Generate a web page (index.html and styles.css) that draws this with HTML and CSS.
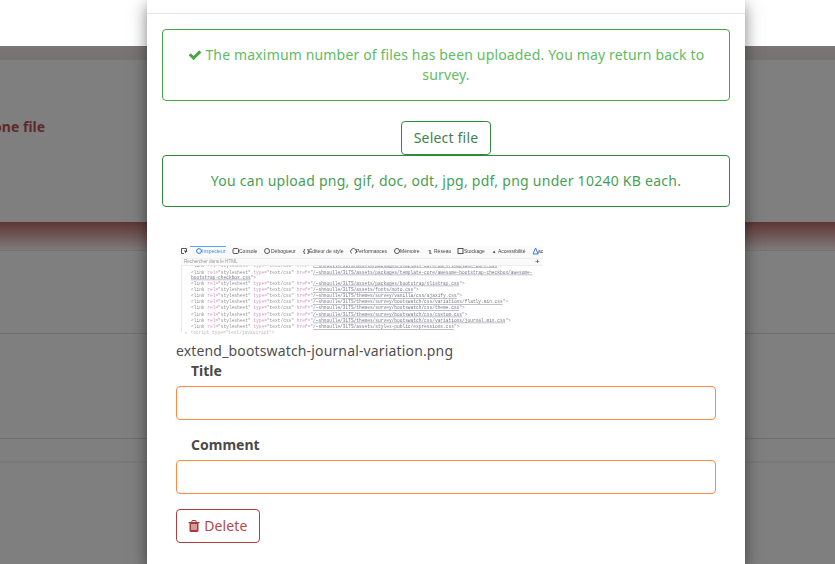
FILE: index.html
```html
<!DOCTYPE html>
<html lang="en">
<head>
<meta charset="utf-8">
<title>Upload</title>
<link rel="stylesheet" href="styles.css">
</head>
<body>
<div class="page">
  <div class="page-top"></div>
  <div class="page-dim">
    <div class="band-top"></div>
    <div class="question-row"><span class="question-text">Please upload at least one file</span></div>
    <div class="band-red"></div>
    <div class="row-a"></div>
    <div class="row-b"></div>
    <div class="row-c"></div>
  </div>
</div>
<div class="modal">
  <div class="modal-head"></div>
  <div class="modal-body">
    <div class="alert alert-max">
      <svg class="icon-check" viewBox="0 0 1792 1792"><path d="M1671 566q0 40-28 68l-724 724-136 136q-28 28-68 28t-68-28l-136-136-362-362q-28-28-28-68t28-68l136-136q28-28 68-28t68 28l294 295 656-657q28-28 68-28t68 28l136 136q28 28 28 68z"/></svg>
      The maximum number of files has been uploaded. You may return back to survey.
    </div>
    <div class="select-row"><button class="btn-select" type="button">Select file</button></div>
    <div class="alert alert-info">You can upload png, gif, doc, odt, jpg, pdf, png under 10240 KB each.</div>
    <div class="file-item">
      <svg class="thumb" viewBox="0 0 370 92" width="370" height="92">
        <g class="t-code">
          <text y="22.5"><tspan x="15" class="c-grey">&lt;link </tspan><tspan class="c-pink">rel=</tspan><tspan class="c-grey">"stylesheet" </tspan><tspan class="c-pink">type=</tspan><tspan class="c-grey">"text/css" </tspan><tspan class="c-pink">href=</tspan><tspan class="c-grey">"</tspan><tspan class="c-link">/~shnoulle/3LTS/assets/packages/template-core/core/template-core.css</tspan><tspan class="c-grey">"&gt;</tspan></text>
          <text y="29.7"><tspan x="15" class="c-grey">&lt;link </tspan><tspan class="c-pink">rel=</tspan><tspan class="c-grey">"stylesheet" </tspan><tspan class="c-pink">type=</tspan><tspan class="c-grey">"text/css" </tspan><tspan class="c-pink">href=</tspan><tspan class="c-grey">"</tspan><tspan class="c-link">/~shnoulle/3LTS/assets/packages/template-core/awesome-bootstrap-checkbox/awesome-</tspan></text>
          <text y="34.7"><tspan x="15" class="c-link">bootstrap-checkbox.css</tspan><tspan class="c-grey">"&gt;</tspan></text>
          <text y="40.7"><tspan x="15" class="c-grey">&lt;link </tspan><tspan class="c-pink">rel=</tspan><tspan class="c-grey">"stylesheet" </tspan><tspan class="c-pink">type=</tspan><tspan class="c-grey">"text/css" </tspan><tspan class="c-pink">href=</tspan><tspan class="c-grey">"</tspan><tspan class="c-link">/~shnoulle/3LTS/assets/packages/bootstrap/vlistrap.css</tspan><tspan class="c-grey">"&gt;</tspan></text>
          <text y="47"><tspan x="15" class="c-grey">&lt;link </tspan><tspan class="c-pink">rel=</tspan><tspan class="c-grey">"stylesheet" </tspan><tspan class="c-pink">type=</tspan><tspan class="c-grey">"text/css" </tspan><tspan class="c-pink">href=</tspan><tspan class="c-grey">"</tspan><tspan class="c-link">/~shnoulle/3LTS/assets/fonts/noto.css</tspan><tspan class="c-grey">"&gt;</tspan></text>
          <text y="53"><tspan x="15" class="c-grey">&lt;link </tspan><tspan class="c-pink">rel=</tspan><tspan class="c-grey">"stylesheet" </tspan><tspan class="c-pink">type=</tspan><tspan class="c-grey">"text/css" </tspan><tspan class="c-pink">href=</tspan><tspan class="c-grey">"</tspan><tspan class="c-link">/~shnoulle/3LTS/themes/survey/vanilla/css/ajaxify.css</tspan><tspan class="c-grey">"&gt;</tspan></text>
          <text y="59"><tspan x="15" class="c-grey">&lt;link </tspan><tspan class="c-pink">rel=</tspan><tspan class="c-grey">"stylesheet" </tspan><tspan class="c-pink">type=</tspan><tspan class="c-grey">"text/css" </tspan><tspan class="c-pink">href=</tspan><tspan class="c-grey">"</tspan><tspan class="c-link">/~shnoulle/3LTS/themes/survey/bootswatch/css/variations/flatly.min.css</tspan><tspan class="c-grey">"&gt;</tspan></text>
          <text y="65.3"><tspan x="15" class="c-grey">&lt;link </tspan><tspan class="c-pink">rel=</tspan><tspan class="c-grey">"stylesheet" </tspan><tspan class="c-pink">type=</tspan><tspan class="c-grey">"text/css" </tspan><tspan class="c-pink">href=</tspan><tspan class="c-grey">"</tspan><tspan class="c-link">/~shnoulle/3LTS/themes/survey/bootswatch/css/theme.css</tspan><tspan class="c-grey">"&gt;</tspan></text>
          <text y="71.7"><tspan x="15" class="c-grey">&lt;link </tspan><tspan class="c-pink">rel=</tspan><tspan class="c-grey">"stylesheet" </tspan><tspan class="c-pink">type=</tspan><tspan class="c-grey">"text/css" </tspan><tspan class="c-pink">href=</tspan><tspan class="c-grey">"</tspan><tspan class="c-link">/~shnoulle/3LTS/themes/survey/bootswatch/css/custom.css</tspan><tspan class="c-grey">"&gt;</tspan></text>
          <text y="77.7"><tspan x="15" class="c-grey">&lt;link </tspan><tspan class="c-pink">rel=</tspan><tspan class="c-grey">"stylesheet" </tspan><tspan class="c-pink">type=</tspan><tspan class="c-grey">"text/css" </tspan><tspan class="c-pink">href=</tspan><tspan class="c-grey">"</tspan><tspan class="c-link">/~shnoulle/3LTS/themes/survey/bootswatch/css/variations/journal.min.css</tspan><tspan class="c-grey">"&gt;</tspan></text>
          <text y="84"><tspan x="15" class="c-grey">&lt;link </tspan><tspan class="c-pink">rel=</tspan><tspan class="c-grey">"stylesheet" </tspan><tspan class="c-pink">type=</tspan><tspan class="c-grey">"text/css" </tspan><tspan class="c-pink">href=</tspan><tspan class="c-grey">"</tspan><tspan class="c-link">/~shnoulle/3LTS/assets/styles-public/expressions.css</tspan><tspan class="c-grey">"&gt;</tspan></text>
          <text y="89.5"><tspan x="9" class="c-faint">▸ &lt;script type="text/javascript"&gt;</tspan></text>
        </g>
        <rect class="t-bar" x="5" y="2" width="362" height="19.5"/>
        <rect class="t-tab" x="14" y="2" width="36" height="1"/>
        <rect class="t-line" x="5" y="14.5" width="362" height="0.5"/>
        <rect class="t-line" x="5" y="21" width="362" height="0.6"/>
        <rect class="t-gutter" x="5" y="21.6" width="1" height="66"/>
        <g class="t-ui">
          <path class="t-ico" d="M10.5 7V4.5h-5v5H8"/>
          <path class="t-solid" d="M8 6l3.5 1.6-1.4.6-.6 1.4z"/>
          <circle class="t-blue-ico" cx="23" cy="7" r="2.4"/>
          <text class="t-blue" x="26" y="9">Inspecteur</text>
          <rect class="t-ico" x="57" y="4.5" width="5.5" height="5" rx="1"/>
          <text x="63" y="9">Console</text>
          <circle class="t-ico" cx="91" cy="7" r="2.5"/>
          <text x="95" y="9">Débogueur</text>
          <text class="t-brace" x="127" y="9.2">{ }</text>
          <text x="133" y="9">Éditeur de style</text>
          <path class="t-ico" d="M175.6 9.4a2.8 2.8 0 1 1 3.8 0"/>
          <text x="180" y="9">Performances</text>
          <circle class="t-ico" cx="221" cy="7" r="2.5"/>
          <text x="224" y="9">Mémoire</text>
          <text x="252" y="9.5">⇅</text>
          <text x="258" y="9">Réseau</text>
          <rect class="t-ico" x="282" y="4.5" width="5" height="5"/>
          <text x="288" y="9">Stockage</text>
          <text x="316" y="9.5">✦</text>
          <text x="322" y="9">Accessibilité</text>
          <path class="t-blue-ico" d="M357 10l2.6-6 2.6 6z"/>
          <text x="362" y="9">ac</text>
          <text class="t-search" x="8" y="19">Rechercher dans le HTML</text>
          <text class="t-plus" x="359" y="20">+</text>
        </g>
      </svg>
      <div class="file-name">extend_bootswatch-journal-variation.png</div>
      <label class="field-label" for="f-title">Title</label>
      <input class="field-input" id="f-title" type="text">
      <label class="field-label field-label-2" for="f-comment">Comment</label>
      <input class="field-input" id="f-comment" type="text">
      <button class="btn-delete" type="button">
        <svg class="icon-trash" viewBox="128 0 1536 1792"><path d="M704 1376v-704q0-14-9-23t-23-9h-64q-14 0-23 9t-9 23v704q0 14 9 23t23 9h64q14 0 23-9t9-23zm256 0v-704q0-14-9-23t-23-9h-64q-14 0-23 9t-9 23v704q0 14 9 23t23 9h64q14 0 23-9t9-23zm256 0v-704q0-14-9-23t-23-9h-64q-14 0-23 9t-9 23v704q0 14 9 23t23 9h64q14 0 23-9t9-23zm-544-992h448l-48-117q-7-9-17-11h-317q-10 2-17 11zm928 32v64q0 14-9 23t-23 9h-96v948q0 83-47 143.5t-113 60.5h-832q-66 0-113-58.5t-47-141.5v-952h-96q-14 0-23-9t-9-23v-64q0-14 9-23t23-9h309l70-167q15-37 54-63t79-26h320q40 0 79 26t54 63l70 167h309q14 0 23 9t9 23z"/></svg>
        Delete
      </button>
    </div>
  </div>
</div>
</body>
</html>
```
FILE: styles.css
```css
* { box-sizing: border-box; }
html, body { margin: 0; padding: 0; height: 100%; overflow: hidden; background: #fff; }
body { font-family: "Noto Sans", sans-serif; font-size: 14px; line-height: 20px; color: #444; }

.page { height: 564px; display: flex; flex-direction: column; }
.page-top { height: 46px; background: #fff; }
.page-dim { flex: 1; background: #7f7f7f; display: flex; flex-direction: column; overflow: hidden; }
.band-top { height: 14px; background: linear-gradient(#7a7676, #777272); }
.question-row { height: 162px; display: flex; justify-content: flex-end; width: 45px; overflow: hidden; white-space: nowrap; padding-top: 57px; }
.question-text { font-weight: 700; font-size: 14px; color: #5f2a2a; flex: none; }
.band-red { height: 29px; background: linear-gradient(#5f3535, #7f7a7a); border-bottom: 1px solid #737373; }
.row-a { height: 83px; border-bottom: 1px solid #6e6e6e; }
.row-b { height: 105px; border-bottom: 1px solid #6e6e6e; }
.row-c { height: 24px; background: linear-gradient(#7f7f7f 90%, #757575); }

.modal { position: absolute; top: 0; left: 147px; width: 598px; height: 564px; background: #fff; box-shadow: 0 5px 15px rgba(0, 0, 0, .5); overflow: hidden; }
.modal-head { height: 14px; border-bottom: 1px solid #e5e5e5; }
.modal-body { padding: 15px; display: flex; flex-direction: column; }

.alert { border: 1px solid; border-radius: 4px; padding: 15px; text-align: center; background: #fff; }
.alert-max { border-color: #43a743; color: #62bb62; padding-left: 20px; padding-right: 20px; letter-spacing: .16px; }
.alert-info { border-color: #2e8b37; color: #489f54; letter-spacing: .26px; }
.icon-check { width: 14px; height: 14px; fill: #43a743; vertical-align: -2px; }

.select-row { display: flex; justify-content: center; margin-top: 20px; }
.btn-select { font: inherit; letter-spacing: .2px; width: 90px; height: 34px; background: #fff; border: 1px solid #2e8b37; border-radius: 4px; color: #457f4d; padding: 0; }

.file-item { padding: 37px 14px 0; display: flex; flex-direction: column; align-items: flex-start; }
.thumb { display: block; filter: blur(.4px); }
.t-bar { fill: #fafafa; }
.t-tab { fill: #5aa5f0; }
.t-line { fill: #e4e4e4; }
.t-gutter { fill: #e8e8e8; }
.t-ui text { font-family: "Liberation Sans", sans-serif; font-size: 5px; fill: #444; }
.t-ui .t-blue { fill: #3f8fe8; }
.t-ui .t-search { fill: #999; font-size: 4.6px; }
.t-ui .t-plus { font-size: 8px; fill: #333; }
.t-ui .t-brace { font-size: 6px; font-weight: 700; }
.t-ico { fill: none; stroke: #444; stroke-width: .9; }
.t-solid { fill: #444; }
.t-blue-ico { fill: none; stroke: #2f80e0; stroke-width: 1; }
.t-code text { font-family: "Liberation Mono", monospace; font-size: 4.53px; }
.c-grey { fill: #949494; }
.c-pink { fill: #cf98c8; }
.c-link { fill: #778; text-decoration: underline; }
.c-faint { fill: #bbb; }

.file-name { margin-top: 5px; font-size: 14px; letter-spacing: .15px; line-height: 20px; color: #505050; }
.field-label { display: block; margin: 0 0 5px 15px; font-weight: 700; line-height: 20px; color: #4a4a4a; }
.field-label-2 { margin-top: 15px; }
.field-input { display: block; width: 540px; height: 34px; border: 1px solid #fd8a3e; border-radius: 4px; background: #fff; outline: none; }
.btn-delete { margin-top: 15px; font: inherit; letter-spacing: .15px; width: 84px; height: 34px; background: #fff; border: 1px solid #ad3f3f; border-radius: 4px; color: #b34a4a; padding: 0; }
.icon-trash { width: 12px; height: 14px; fill: #a83a3a; vertical-align: -2px; }
```
